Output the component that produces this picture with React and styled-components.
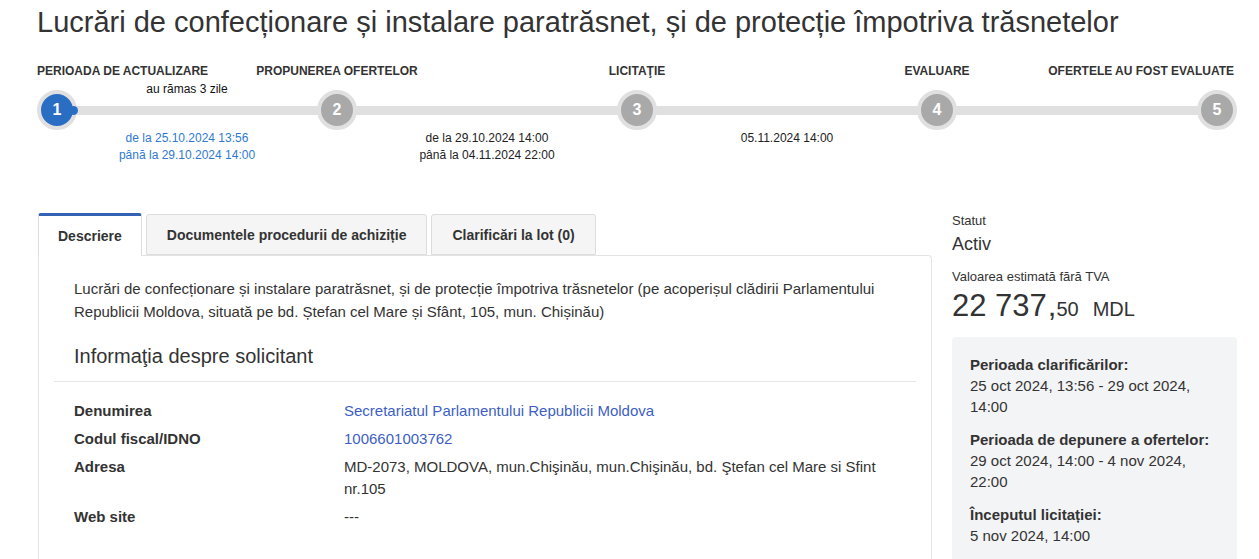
import React from "react"
import styled, { createGlobalStyle } from "styled-components"

const GlobalStyle = createGlobalStyle`
  body {
    margin: 0;
    background: #fff;
    font-family: "Liberation Sans", Arial, sans-serif;
    color: #333;
  }
`

const steps = [
  { num: 1, label: "PERIOADA DE ACTUALIZARE", align: "start", active: true },
  { num: 2, label: "PROPUNEREA OFERTELOR", align: "center" },
  { num: 3, label: "LICITAŢIE", align: "center" },
  { num: 4, label: "EVALUARE", align: "center" },
  { num: 5, label: "OFERTELE AU FOST EVALUATE", align: "end" },
]

const periods = [
  { lines: ["de la 25.10.2024 13:56", "până la 29.10.2024 14:00"], current: true },
  { lines: ["de la 29.10.2024 14:00", "până la 04.11.2024 22:00"] },
  { lines: ["05.11.2024 14:00"] },
  { lines: [] },
]

const buyer = [
  { label: "Denumirea", value: "Secretariatul Parlamentului Republicii Moldova", link: true },
  { label: "Codul fiscal/IDNO", value: "1006601003762", link: true },
  {
    label: "Adresa",
    value: "MD-2073, MOLDOVA, mun.Chişinău, mun.Chişinău, bd. Ştefan cel Mare si Sfint nr.105",
  },
  { label: "Web site", value: "---" },
]

const dates = [
  { title: "Perioada clarificărilor:", text: "25 oct 2024, 13:56 - 29 oct 2024, 14:00" },
  { title: "Perioada de depunere a ofertelor:", text: "29 oct 2024, 14:00 - 4 nov 2024, 22:00" },
  { title: "Începutul licitației:", text: "5 nov 2024, 14:00" },
]

const App = () => {
  return (
    <Page>
      <GlobalStyle />
      <Title>
        Lucrări de confecționare și instalare paratrăsnet, și de protecție împotriva trăsnetelor
      </Title>

      <Stepper>
        <StepGrid>
          {steps.map((s, i) => (
            <React.Fragment key={s.num}>
              <StepLabel $align={s.align}>{s.label}</StepLabel>
              {i < steps.length - 1 && <span />}
            </React.Fragment>
          ))}
        </StepGrid>
        <Quarters>
          <Remaining>au rămas 3 zile</Remaining>
        </Quarters>
        <StepGrid $circles>
          {steps.map((s, i) => (
            <React.Fragment key={s.num}>
              <Circle $active={s.active}>
                <span>{s.num}</span>
                {s.active && <Knob />}
              </Circle>
              {i < steps.length - 1 && <Track />}
            </React.Fragment>
          ))}
        </StepGrid>
        <Quarters>
          {periods.map((p, i) => (
            <Period key={i} $current={p.current}>
              {p.lines.map((l) => (
                <div key={l}>{l}</div>
              ))}
            </Period>
          ))}
        </Quarters>
      </Stepper>

      <Main>
        <div>
          <Tabs>
            <Tab $active>Descriere</Tab>
            <Tab>Documentele procedurii de achiziție</Tab>
            <Tab>Clarificări la lot (0)</Tab>
          </Tabs>
          <Panel>
            <Description>
              Lucrări de confecționare și instalare paratrăsnet, și de protecție împotriva
              trăsnetelor (pe acoperișul clădirii Parlamentului Republicii Moldova, situată pe
              bd. Ștefan cel Mare și Sfânt, 105, mun. Chișinău)
            </Description>
            <SectionTitle>Informaţia despre solicitant</SectionTitle>
            <InfoTable>
              {buyer.map((r) => (
                <React.Fragment key={r.label}>
                  <InfoLabel>{r.label}</InfoLabel>
                  <InfoValue $link={r.link}>{r.value}</InfoValue>
                </React.Fragment>
              ))}
            </InfoTable>
          </Panel>
        </div>

        <Side>
          <SmallCaption>Statut</SmallCaption>
          <Status>Activ</Status>
          <SmallCaption $top={14}>Valoarea estimată fără TVA</SmallCaption>
          <Amount>
            22 737<Comma>,</Comma>
            <Cents>50</Cents>
            <Currency>MDL</Currency>
          </Amount>
          <DatesBox>
            {dates.map((d) => (
              <DateItem key={d.title}>
                <strong>{d.title}</strong>
                <div>{d.text}</div>
              </DateItem>
            ))}
          </DatesBox>
        </Side>
      </Main>
    </Page>
  )
}

const Page = styled.div`
  padding: 0 22px 0 37px;
`

const Title = styled.h1`
  margin: 0;
  padding-top: 6px;
  font-size: 29px;
  line-height: 32px;
  font-weight: 400;
  color: #333;
`

const Stepper = styled.div`
  width: 1200px;
  margin-top: 26px;
`

const StepGrid = styled.div`
  display: grid;
  grid-template-columns: 40px 240px 40px 260px 40px 260px 40px 240px 40px;
  align-items: center;
  margin-top: ${(p) => (p.$circles ? "-6px" : "0")};
`

const StepLabel = styled.div`
  justify-self: ${(p) => (p.$align === "center" ? "unsafe center" : p.$align)};
  margin-right: ${(p) => (p.$align === "end" ? "3px" : "0")};
  white-space: nowrap;
  font-size: 12px;
  font-weight: 700;
  line-height: 14px;
  color: #333;
`

const Quarters = styled.div`
  display: grid;
  grid-template-columns: repeat(4, 1fr);
  text-align: center;
`

const Remaining = styled.div`
  font-size: 12px;
  line-height: 14px;
  color: #111;
  margin-top: 4px;
`

const Circle = styled.div`
  position: relative;
  z-index: 1;
  width: 40px;
  height: 40px;
  box-sizing: border-box;
  border-radius: 50%;
  border: 4px solid #e0e0e0;
  background: ${(p) => (p.$active ? "#2a6ec4" : "#a9a9a9")};
  display: flex;
  align-items: center;
  justify-content: center;
  color: #fff;
  font-size: 16px;
  font-weight: 700;
  span {
    position: relative;
    z-index: 2;
  }
`

const Knob = styled.div`
  position: absolute;
  right: -5px;
  top: 12px;
  width: 9px;
  height: 9px;
  border-radius: 50%;
  background: #2a6ec4;
`

const Track = styled.div`
  height: 9px;
  margin: 1px -4px 0;
  background: #e0e0e0;
`

const Period = styled.div`
  margin-top: 0;
  font-size: 12px;
  line-height: 17px;
  color: ${(p) => (p.$current ? "#2f7ad0" : "#222")};
`

const Main = styled.div`
  display: grid;
  grid-template-columns: 894px 285px;
  column-gap: 20px;
  margin-top: 49px;
  padding-left: 1px;
`

const Tabs = styled.div`
  display: flex;
  align-items: flex-end;
  gap: 4px;
  height: 42px;
`

const Tab = styled.div`
  box-sizing: border-box;
  height: ${(p) => (p.$active ? "43px" : "41px")};
  margin-bottom: ${(p) => (p.$active ? "-1px" : "0")};
  padding: 0 ${(p) => (p.$active ? "19px" : "20px")};
  display: flex;
  align-items: center;
  font-size: 14px;
  font-weight: 700;
  color: #333;
  background: ${(p) => (p.$active ? "#fff" : "#f5f5f5")};
  border: 1px solid #ddd;
  border-bottom: ${(p) => (p.$active ? "none" : "1px solid #ddd")};
  border-top: ${(p) => (p.$active ? "3px solid #3362b5" : "1px solid #ddd")};
  border-radius: 3px 3px 0 0;
  position: relative;
  z-index: 1;
`

const Panel = styled.div`
  border: 1px solid #e3e3e3;
  border-bottom: none;
  border-radius: 0 4px 0 0;
  padding: 21px 15px 20px;
  min-height: 300px;
`

const Description = styled.p`
  margin: 0;
  padding: 0 20px;
  font-size: 15px;
  line-height: 23px;
  color: #333;
`

const SectionTitle = styled.h3`
  margin: 22px 0 0;
  padding: 0 20px 14px;
  border-bottom: 1px solid #e5e5e5;
  font-size: 20px;
  line-height: 22px;
  font-weight: 400;
  color: #333;
`

const InfoTable = styled.div`
  display: grid;
  grid-template-columns: 270px 1fr;
  padding: 15px 20px 0;
`

const InfoLabel = styled.div`
  padding: 3px 0;
  font-size: 15px;
  line-height: 22px;
  font-weight: 700;
  color: #333;
`

const InfoValue = styled.div`
  padding: 3px 0;
  font-size: 15px;
  line-height: 22px;
  color: ${(p) => (p.$link ? "#3d5fc4" : "#333")};
`

const Side = styled.div`
  display: flex;
  flex-direction: column;
  align-items: flex-start;
`

const SmallCaption = styled.div`
  margin-top: ${(p) => p.$top || 0}px;
  font-size: 13px;
  line-height: 16px;
  color: #333;
`

const Status = styled.div`
  margin-top: 4px;
  font-size: 18px;
  line-height: 22px;
  color: #333;
`

const Amount = styled.div`
  margin-top: 2px;
  font-size: 31px;
  line-height: 38px;
  color: #333;
  white-space: nowrap;
`

const Comma = styled.span`
  margin-left: 1px;
`

const Cents = styled.span`
  margin-left: 0;
  font-size: 20px;
`

const Currency = styled.span`
  margin-left: 14px;
  font-size: 20px;
`

const DatesBox = styled.div`
  align-self: stretch;
  margin-top: 9px;
  padding: 17px 18px 10px;
  background: #f3f4f6;
  border-radius: 4px;
`

const DateItem = styled.div`
  margin-bottom: 12px;
  font-size: 15px;
  line-height: 21px;
  color: #333;
  strong {
    display: block;
  }
`

export default App
